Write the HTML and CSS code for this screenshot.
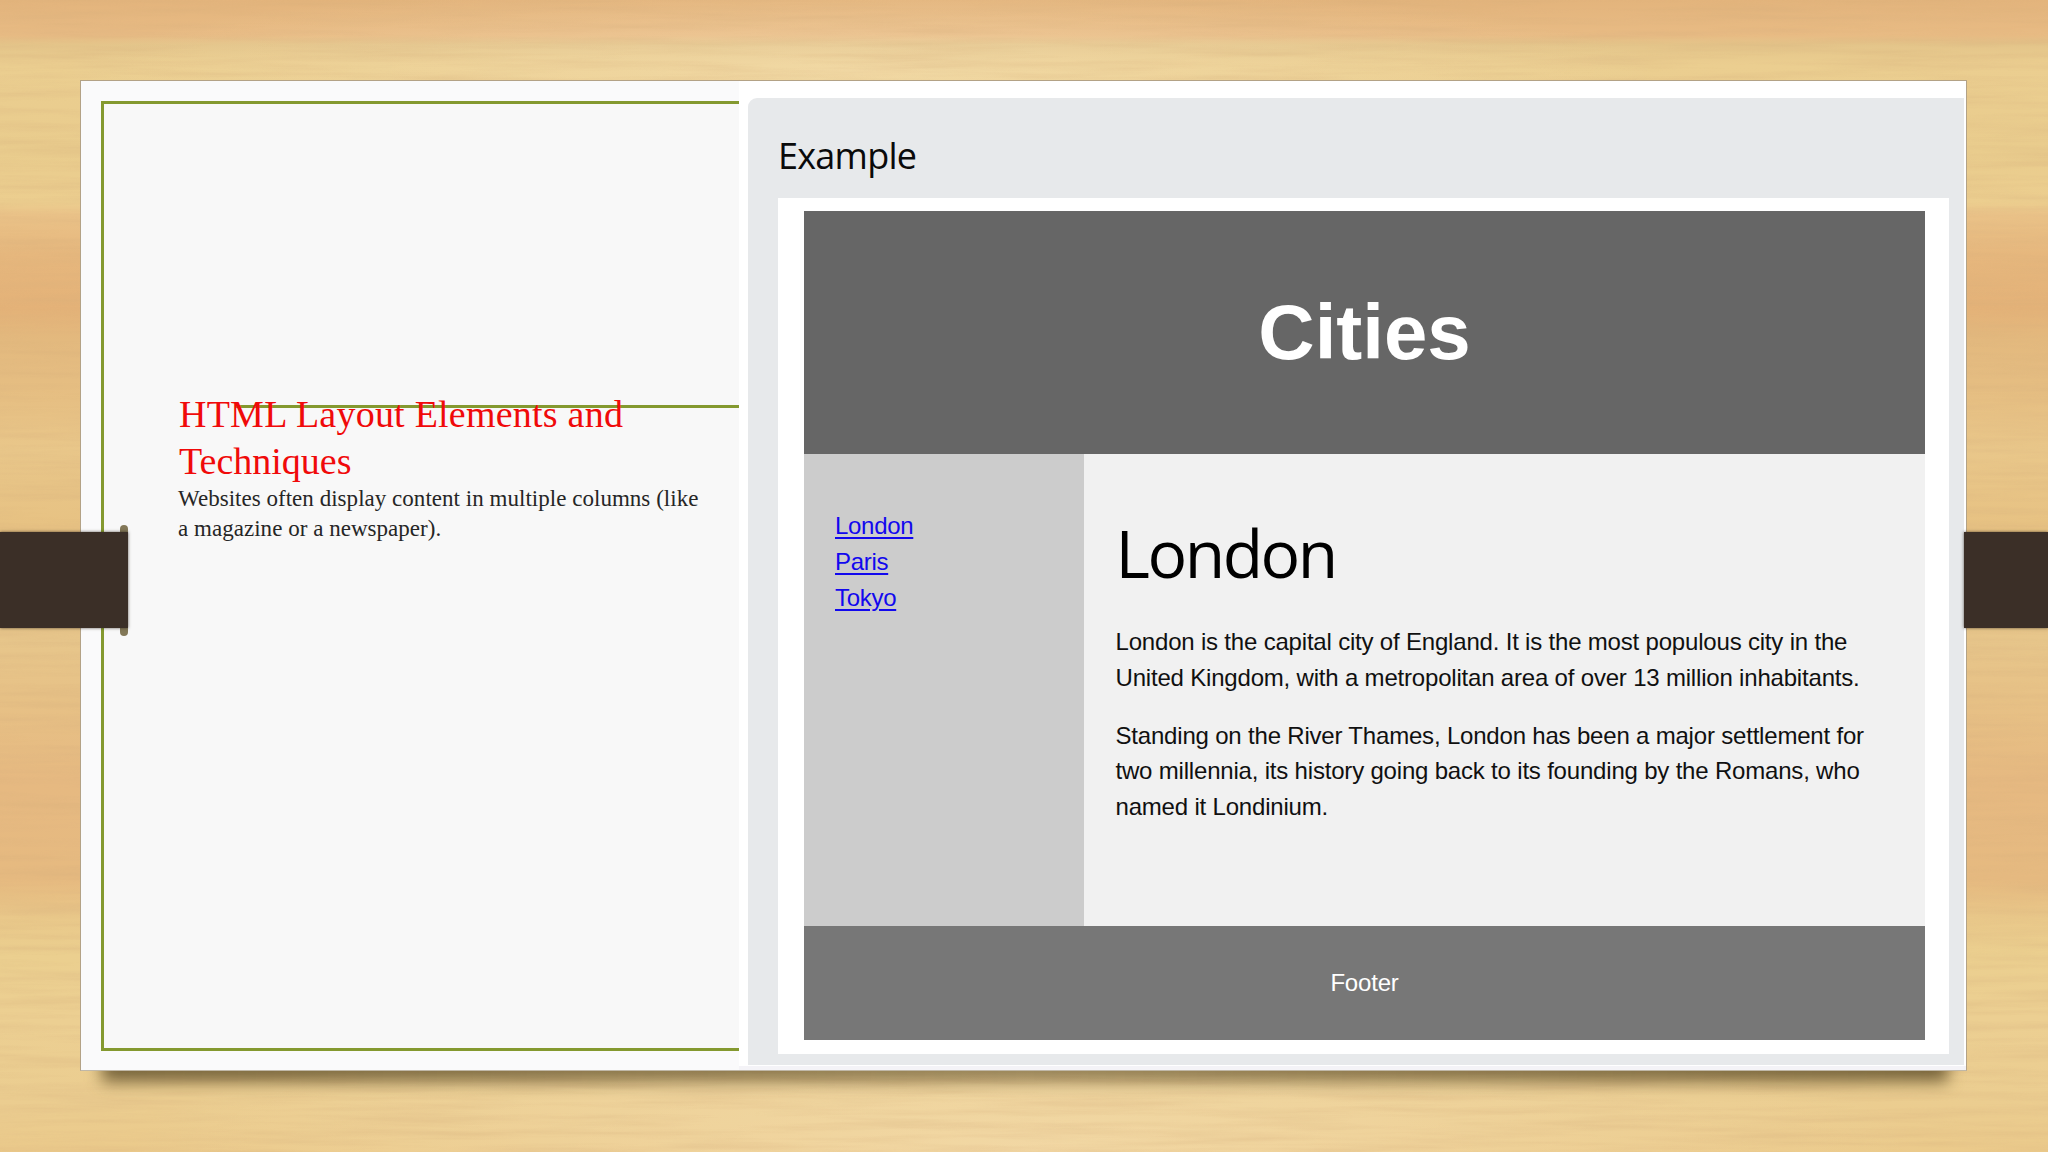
FILE: index.html
```html
<!DOCTYPE html>
<html lang="en">
<head>
<meta charset="utf-8">
<title>HTML Layout Elements and Techniques</title>
<link rel="stylesheet" href="styles.css">
</head>
<body>
<main class="desk">
  <svg class="grain" width="2048" height="1152" aria-hidden="true">
    <filter id="wood" x="0" y="0" width="100%" height="100%">
      <feTurbulence type="fractalNoise" baseFrequency="0.006 0.13" numOctaves="5" seed="7"/>
      <feColorMatrix values="0 0 0 0 0.66  0 0 0 0 0.42  0 0 0 0 0.2  1.1 0 0 0 -0.42"/>
    </filter>
    <rect width="2048" height="1152" filter="url(#wood)"/>
  </svg>
  <div class="shadow"></div>
  <div class="paper">
    <section class="intro">
      <div class="frame">
        <div class="rule"></div>
        <div class="copy">
          <h1 class="title"><span class="wide">HTML Layout Elements and</span><br>Techniques</h1>
          <p class="lead">Websites often display content in multiple columns (like<br>a magazine or a newspaper).</p>
        </div>
      </div>
    </section>
    <section class="shot">
      <div class="panel">
        <h2 class="example">Example</h2>
        <div class="page">
          <header class="banner">Cities</header>
          <div class="columns">
            <nav class="links">
              <a href="#">London</a>
              <a href="#">Paris</a>
              <a href="#">Tokyo</a>
            </nav>
            <article class="article">
              <h3 class="city">London</h3>
              <p>London is the capital city of England. It is the most populous city in the<br>United Kingdom, with a metropolitan area of over 13 million inhabitants.</p>
              <p>Standing on the River Thames, London has been a major settlement for<br>two millennia, its history going back to its founding by the Romans, who<br>named it Londinium.</p>
            </article>
          </div>
          <footer class="footer">Footer</footer>
        </div>
      </div>
    </section>
  </div>
  <div class="slot"></div>
  <div class="strap strap-left"></div>
  <div class="strap strap-right"></div>
</main>
</body>
</html>
```

FILE: styles.css
```css
* { box-sizing: border-box; }
body { margin: 0; }
h1, h2, h3, p { margin: 0; font-weight: 400; }

.desk {
  position: relative;
  width: 2048px;
  height: 1152px;
  padding: 80px 81px 81px 80px;
  overflow: hidden;
  background:
    radial-gradient(ellipse 900px 160px at 50% 100%, rgba(255, 240, 210, .35), transparent),
    radial-gradient(ellipse 800px 90px at 42% 70px, rgba(255, 240, 210, .3), transparent),
    linear-gradient(#e3b47c 0, #e8bb84 35px, #e4c58a 45px, #ebce90 65px, #e9cc8d 150px,
      #ecce8f 202px, #eac288 215px, #e6b77d 255px, #e4b278 308px, #e3b97e 340px,
      #e6bf83 400px, #e9c78a 450px, #e7c283 525px, #e7c68b 640px, #e7c186 700px,
      #e6b981 780px, #e6ba80 880px, #e9c88a 918px, #ebcf8f 955px, #eccf92 1020px,
      #ebcd90 1100px, #ebca8b 1152px);
}
.grain { position: absolute; inset: 0; opacity: .5; }

.shadow {
  position: absolute;
  left: 102px;
  right: 100px;
  top: 1040px;
  height: 42px;
  background: linear-gradient(90deg, rgba(80, 65, 30, .75), rgba(80, 65, 30, .55) 50%, rgba(80, 65, 30, .75));
  filter: blur(8px);
}

.paper {
  position: relative;
  display: flex;
  width: 1887px;
  height: 991px;
  border: 1px solid #b3a286;
  border-bottom-color: #c0b8a8;
  background: #fafafb;
}
.intro { width: 658px; padding: 20px 0 19px 20px; }
.frame {
  display: grid;
  height: 950px;
  border: 3px solid #84992f;
  border-right: 0;
  background: #f8f8f8;
}
.rule { grid-area: 1 / 1; height: 3px; margin: 301px 0 0 131px; background: #84992f; }
.copy {
  grid-area: 1 / 1;
  position: relative;
  padding: 287px 0 0 74px;
  font-family: "Liberation Serif", serif;
  white-space: nowrap;
}
.title { padding-left: 1px; font-size: 38px; line-height: 47px; color: #f00a0a; }
.wide { letter-spacing: .23px; }
.lead { margin-top: -1px; font-size: 23px; line-height: 29.8px; letter-spacing: .03px; color: #262626; }

.shot { flex: 1; padding: 17px 2px 0 9px; background: #fff; border-bottom: 4px solid #f4f3f7; }
.panel {
  height: 967px;
  padding: 33px 15px 0 30px;
  border-radius: 9px 0 0 0;
  background: #e7e9eb;
}
.example {
  height: 67px;
  font: 400 36px/49px "Open Sans", sans-serif;
  letter-spacing: -.75px;
  color: #0a0a0a;
}
.page {
  height: 856px;
  padding: 13px 24px 14px 26px;
  background: #fff;
  font: 24px/35.8px "Liberation Sans", sans-serif;
  letter-spacing: -.19px;
  color: #101010;
}
.banner {
  display: flex;
  align-items: center;
  justify-content: center;
  height: 243px;
  background: #666;
  font: bold 78px/87px "Liberation Sans", sans-serif;
  letter-spacing: 0;
  color: #fff;
}
.columns { display: flex; height: 472px; }
.links {
  display: flex;
  flex-direction: column;
  align-items: flex-start;
  width: 280px;
  padding: 54px 31px;
  background: #ccc;
}
.links a {
  letter-spacing: -.3px;
  color: #1208ee;
  text-decoration-thickness: 2px;
  text-underline-offset: 3px;
}
.article { flex: 1; padding: 53px 0 0 31.5px; background: #f1f1f1; white-space: nowrap; }
.article p { margin-bottom: 22px; }
.city {
  margin-bottom: 26px;
  font: 400 66px/91px "Open Sans", sans-serif;
  letter-spacing: -2.5px;
  color: #000;
}
.footer { height: 114px; padding-top: 39px; background: #777; text-align: center; color: #fff; }

.slot { position: absolute; left: 120px; top: 525px; width: 8px; height: 111px; border-radius: 4px; background: #837858; }
.strap {
  position: absolute;
  top: 532px;
  height: 96px;
  background: #3b2f27;
  box-shadow: 0 0 3px rgba(40, 30, 20, .7);
}
.strap-left { left: 0; width: 128px; }
.strap-right { left: 1964px; width: 84px; }
```
